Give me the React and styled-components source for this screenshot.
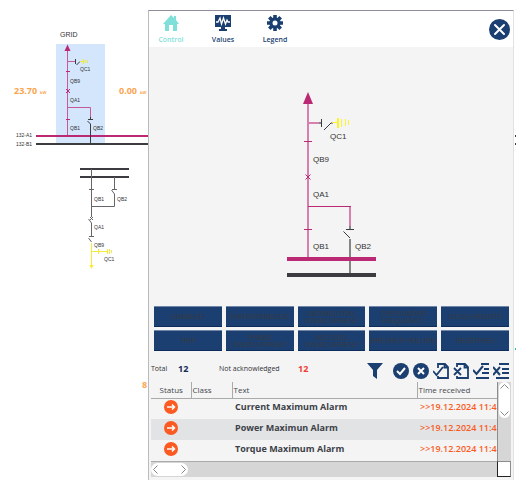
import React from "react";
import styled, { createGlobalStyle } from "styled-components";

const navy = "#1b3f70";
const magenta = "#bb2873";
const pink = "#d680ae";
const dark = "#3c3c40";
const orange = "#fb5b22";

const GlobalStyle = createGlobalStyle`
  * { box-sizing: border-box; }
  body { margin: 0; background: #fff; font-family: "Open Sans", "Noto Sans", sans-serif; }
  button { font: inherit; border: 0; padding: 0; background: none; cursor: pointer; }
`;

const Page = styled.main`
  display: grid;
  grid-template-columns: 148px minmax(0, 1fr) 2px;
  min-height: 100vh;
`;
const Drawing = styled.svg`
  display: block;
  flex: none;
`;
const Overview = styled.section`
  overflow: hidden;
`;
const Dialog = styled.section`
  display: flex;
  flex-direction: column;
  margin-top: 10px;
  border-left: 1px solid #b9bbc1;
  border-top: 1px solid #8d8c98;
  border-right: 1px solid #e2e2e4;
  background: #f4f4f4;
`;
const Header = styled.header`
  display: flex;
  justify-content: space-between;
  align-items: center;
  height: 36px;
  padding-right: 3px;
  background: #fff;
`;
const Tabs = styled.nav`
  display: flex;
  gap: 8px;
  padding-top: 2px;
`;
const Tab = styled.button`
  display: flex;
  flex-direction: column;
  align-items: center;
  gap: 4px;
  width: 44px;
  font-size: 7px;
  line-height: 10px;
  font-weight: 600;
  color: ${(p) => (p.$active ? "#7fdfd9" : navy)};
`;
const IconButton = styled.button`
  display: flex;
  color: ${navy};
`;
const DiagramArea = styled.div`
  display: flex;
  justify-content: center;
  padding: 43px 0 28px 2px;
`;
const Functions = styled.div`
  display: grid;
  grid-template-columns: repeat(5, minmax(0, 1fr));
  gap: 3px 4px;
  padding: 0 4px 0 5px;
`;
const FunctionButton = styled.button`
  height: 21px;
  border-top: 1px solid #7186a6;
  border-bottom: 1px solid #0d2b5b;
  background: ${navy};
  color: #373b43;
  font-family: "Liberation Sans", Arial, sans-serif;
  font-size: 7px;
  line-height: 7px;
  white-space: pre-line;
`;
const Summary = styled.div`
  display: flex;
  justify-content: space-between;
  align-items: center;
  height: 31px;
  padding: 8px 4px 0 2px;
`;
const Counts = styled.dl`
  display: grid;
  grid-template-columns: 27px 41px 79px auto;
  align-items: center;
  margin: 0 0 4px;
  font-size: 7px;
  line-height: 12px;
  color: #303238;
`;
const Count = styled.dd`
  margin: 0;
  font-size: 9px;
  font-weight: 700;
  color: ${(p) => (p.$alert ? "#f03c32" : "#122a56")};
`;
const Actions = styled.div`
  display: flex;
  gap: 4px;

  & > :first-child { margin-right: 6px; }
`;
const AlarmList = styled.div`
  display: grid;
  grid-template-columns: minmax(0, 1fr) 14px;
  margin: 0 2px;
`;
const TableView = styled.div`
  overflow: hidden;
`;
const Table = styled.table`
  width: 100%;
  table-layout: fixed;
  border-collapse: collapse;
  white-space: nowrap;
`;
const HeadCell = styled.th`
  width: ${(p) => p.$width};
  height: 16px;
  padding: 0 0 0 1px;
  border-left: ${(p) => (p.$first ? "0" : "1px solid #aaa")};
  border-bottom: 1px solid #aaa;
  text-align: ${(p) => (p.$first ? "center" : "left")};
  font-size: 8px;
  line-height: 12px;
  font-weight: 400;
  color: #44474d;
`;
const AlarmRow = styled.tr`
  background: ${(p) => (p.$alternate ? "#e1e3e5" : "#f4f4f4")};
`;
const Cell = styled.td`
  height: 21px;
  padding: ${(p) => (p.$center ? "0 0 4px" : "0 0 3px 3px")};
  text-align: ${(p) => (p.$center ? "center" : "left")};
  font-size: 9px;
  line-height: 14px;
  font-weight: ${(p) => (p.$time ? 600 : 700)};
  color: ${(p) => (p.$time ? orange : "#3c4148")};

  & svg { display: block; margin: 0 auto; }
`;
const VerticalBar = styled.div`
  display: flex;
  border-left: 1px solid #8c8c8c;
  background: #d6d6d6;
`;
const VerticalThumb = styled.div`
  display: flex;
  flex-direction: column;
  justify-content: space-between;
  align-items: center;
  width: 11px;
  height: 36px;
  margin: 0 1px;
  padding: 2px 0;
  border-radius: 6px;
  background: #fff;
`;
const HorizontalBar = styled.div`
  height: 16px;
  border-top: 1px solid #aaa;
  background: #d6d6d6;
`;
const HorizontalThumb = styled.div`
  display: flex;
  justify-content: space-between;
  align-items: center;
  width: 37px;
  height: 13px;
  padding: 0 2px;
  margin-top: 1px;
  border-radius: 7px;
  background: #fff;
`;
const Corner = styled.div`
  border: 1px solid #8c8c8c;
  border-left-color: #222;
  border-bottom-color: #222;
  background: #fff;
`;
const DiagramLabel = styled.text`
  font-family: "Liberation Sans", Arial, sans-serif;
  font-size: ${(p) => p.$size}px;
  fill: #333;
`;
const Measure = styled.text`
  font-size: ${(p) => p.$size}px;
  font-weight: 700;
  fill: #fba54f;
`;

const OverviewDiagram = () => (
  <Drawing width="148" height="470" viewBox="0 0 148 470" role="img" aria-label="Grid overview">
    <rect x="56" y="44" width="49" height="101" fill="#d3e6fb" />
    <DiagramLabel $size={7} x="60" y="37">GRID</DiagramLabel>
    <g fill="none" stroke={magenta}>
      <path stroke="#c75a96" d="M67.5 50V135M68 61.500H75M67.500 107.500H90.500V117" />
      <path d="M66 71.500H70M66 119.500H70M66 89L70 93M70 89L66 93" />
      <path strokeWidth="2" d="M36 136H148" />
    </g>
    <path fill={magenta} d="M67.500 44.500L70.500 51H64.500Z" />
    <g fill="none" stroke={dark}>
      <path d="M75.500 59V64M76.500 65L80 61.500M88 119.500H93M87.500 121L90.500 124V144M90.500 117V119" />
      <path strokeWidth="2" d="M36 144H148M80 169H129M80 177H129" />
      <path stroke="#66666a" d="M91.500 169V217M91.500 206.500H114.500V194M114.500 177V189M111.500 190L114.500 194M89 189.500H94M112 189.500H117M90 217L93 220M93 217L90 220M88.500 219L91.500 223V236M89 236.500H94M88.500 238L91.500 242" />
    </g>
    <g fill="none" stroke="#efe83c">
      <path d="M80 61.500H83M83.500 59V64M85.500 60V63M87.500 60V63" />
      <path stroke="#f6e83c" d="M91.500 243V267M91.500 251.500H107M98.500 249V254M107.500 249V254M109.500 249V254M111.500 250V253" />
    </g>
    <path fill="#fbea28" d="M89.500 265H93.500L91.500 269Z" />
    <DiagramLabel $size={5} x="80" y="71">QC1</DiagramLabel>
    <DiagramLabel $size={5} x="70" y="83">QB9</DiagramLabel>
    <DiagramLabel $size={5} x="70" y="102">QA1</DiagramLabel>
    <DiagramLabel $size={5} x="70" y="130">QB1</DiagramLabel>
    <DiagramLabel $size={5} x="93" y="130">QB2</DiagramLabel>
    <DiagramLabel $size={5} x="16" y="137">132-A1</DiagramLabel>
    <DiagramLabel $size={5} x="16" y="146">132-B1</DiagramLabel>
    <DiagramLabel $size={5} x="94" y="201">QB1</DiagramLabel>
    <DiagramLabel $size={5} x="117" y="201">QB2</DiagramLabel>
    <DiagramLabel $size={5} x="94" y="229">QA1</DiagramLabel>
    <DiagramLabel $size={5} x="94" y="247">QB9</DiagramLabel>
    <DiagramLabel $size={5} x="104" y="261">QC1</DiagramLabel>
    <Measure $size={9} x="14" y="94">23.70</Measure>
    <Measure $size={4} x="40" y="94">kW</Measure>
    <Measure $size={9} x="119" y="94">0.00</Measure>
    <Measure $size={4} x="140" y="94">kW</Measure>
    <Measure $size={9} x="142" y="388">8</Measure>
  </Drawing>
);

const FeederDiagram = () => (
  <Drawing width="90" height="188" viewBox="0 0 90 188" role="img" aria-label="Feeder diagram">
    <g fill="none">
      <path stroke={pink} strokeWidth="2" d="M21 12V168M63 117V136" />
      <path stroke={magenta} d="M21 116.500H64M17 51.500H25M17 139.500H25" />
      <path stroke={pink} strokeWidth="2" d="M22 33H32" />
      <path stroke={magenta} strokeWidth="1" d="M18.500 84.500L23.500 89.500M23.500 84.500L18.500 89.500" />
      <path stroke="#858588" strokeWidth="2" d="M63 149V184M32 33H34M63 136V139" />
      <path stroke={dark} d="M34.500 29V37M37 40L44 33H46M59 139.500H67M56.500 141.500L63 148" />
      <path stroke="#fbf32d" d="M45 32.500H51M58.500 29V36M61.500 30V35" />
      <path stroke="#fbf32d" strokeWidth="2" d="M51 28V38" />
      <path stroke="#fbf32d" d="M54.500 29V37" />
      <path stroke={magenta} strokeWidth="4" d="M0 169H89" />
      <path stroke={dark} strokeWidth="4" d="M0 185H89" />
    </g>
    <path fill={magenta} d="M21 2L26 14H16Z" />
    <DiagramLabel $size={8} x="43" y="49">QC1</DiagramLabel>
    <DiagramLabel $size={8} x="26" y="72">QB9</DiagramLabel>
    <DiagramLabel $size={8} x="26" y="107">QA1</DiagramLabel>
    <DiagramLabel $size={8} x="26" y="159">QB1</DiagramLabel>
    <DiagramLabel $size={8} x="68" y="159">QB2</DiagramLabel>
  </Drawing>
);

const HomeIcon = () => (
  <Drawing width="16" height="16" viewBox="0 0 16 16" fill="currentColor" aria-hidden="true">
    <path d="M8 0L11 3V1H13V5L16 9H14V16H10V10H6V16H2V9H0Z" />
  </Drawing>
);
const MonitorIcon = () => (
  <Drawing width="16" height="16" viewBox="0 0 16 16" fill="currentColor" aria-hidden="true">
    <path d="M0 0H16V12H10V14H12V16H4V14H6V12H0Z" />
    <path d="M1 7H3L5 3L6.500 9L8.500 3L10.500 9L12 5L13 7H15" fill="none" stroke="#fff" strokeWidth="1.300" />
  </Drawing>
);
const GearIcon = () => (
  <Drawing width="16" height="16" viewBox="0 0 16 16" aria-hidden="true">
    <g stroke="currentColor" strokeWidth="3.600">
      <path d="M8 0V16M0 8H16M2.300 2.300L13.700 13.700M13.700 2.300L2.300 13.700" />
    </g>
    <circle cx="8" cy="8" r="5.700" fill="currentColor" />
    <circle cx="8" cy="8" r="2.500" fill="#fff" />
  </Drawing>
);
const CloseIcon = () => (
  <Drawing width="21" height="21" viewBox="0 0 21 21" aria-hidden="true">
    <circle cx="10.500" cy="10.500" r="10.500" fill="currentColor" />
    <path d="M6 6L15 15M15 6L6 15" stroke="#fff" strokeWidth="2" strokeLinecap="round" />
  </Drawing>
);

const glyphs = {
  filter: <path d="M0 0H16L10 7V16L6 13V7Z" fill="currentColor" />,
  ack: (
    <>
      <circle cx="8" cy="8" r="8" fill="currentColor" />
      <path d="M4 8L7 11L12 5" stroke="#fff" strokeWidth="2" />
    </>
  ),
  reject: (
    <>
      <circle cx="8" cy="8" r="8" fill="currentColor" />
      <path d="M5 5L11 11M11 5L5 11" stroke="#fff" strokeWidth="2" />
    </>
  ),
  ackPage: (
    <path d="M5 5V1H12L15 4V15H5V13M11.500 1V4.500H15M0 8L3.500 12L10 4" stroke="currentColor" strokeWidth="1.800" />
  ),
  rejectPage: (
    <path d="M4 4V1H12L15 4V15H4V13M11.500 1V4.500H15M1 5L8 12M8 5L1 12" stroke="currentColor" strokeWidth="1.800" />
  ),
  ackList: (
    <path d="M8 1H16M11 6H16M9 10H16M3 15H16M0 7L3.500 11L10 3" stroke="currentColor" strokeWidth="2" />
  ),
  rejectList: (
    <path d="M6 1H16M9 6H16M9 10H16M3 15H16M0 4L7 12M7 4L0 12" stroke="currentColor" strokeWidth="2" />
  ),
};

const actions = [
  ["filter", "Filter"],
  ["ack", "Acknowledge"],
  ["reject", "Reject"],
  ["ackPage", "Acknowledge page"],
  ["rejectPage", "Reject page"],
  ["ackList", "Acknowledge all"],
  ["rejectList", "Reject all"],
];

const AlarmIcon = () => (
  <svg width="14" height="14" viewBox="0 0 14 14" role="img" aria-label="Incoming">
    <circle cx="7" cy="7" r="7" fill={orange} />
    <path d="M3 7H10M8 4.500L10.500 7L8 9.500" fill="none" stroke="#fff" strokeWidth="1.500" />
  </svg>
);

const Chevron = ({ d, width, height }) => (
  <Drawing width={width} height={height} viewBox={`0 0 ${width} ${height}`} aria-hidden="true">
    <path d={d} fill="none" stroke="#888" />
  </Drawing>
);

const functions = [
  "ENABLED",
  "INSTANTANEOUS",
  "GND/NEUTRAL\nOVERCURRENT",
  "OVER/UNDER\nFREQUENCY",
  "LOCAL/REMOTE",
  "TRIP",
  "PHASE\nOVERCURRENT",
  "NEG SEQ\nOVERCURRENT",
  "BREAKER FAILURE",
  "RESERVED",
];

const alarms = ["Current Maximum Alarm", "Power Maximun Alarm", "Torque Maximum Alarm"];

export default function App() {
  return (
    <>
      <GlobalStyle />
      <Page>
        <Overview>
          <OverviewDiagram />
        </Overview>
        <Dialog role="dialog" aria-label="Feeder control">
          <Header>
            <Tabs>
              <Tab $active aria-current="page"><HomeIcon />Control</Tab>
              <Tab><MonitorIcon />Values</Tab>
              <Tab><GearIcon />Legend</Tab>
            </Tabs>
            <IconButton aria-label="Close"><CloseIcon /></IconButton>
          </Header>
          <DiagramArea>
            <FeederDiagram />
          </DiagramArea>
          <Functions>
            {functions.map((name) => (
              <FunctionButton key={name}>{name}</FunctionButton>
            ))}
          </Functions>
          <Summary>
            <Counts>
              <dt>Total</dt>
              <Count>12</Count>
              <dt>Not acknowledged</dt>
              <Count $alert>12</Count>
            </Counts>
            <Actions>
              {actions.map(([glyph, label]) => (
                <IconButton key={glyph} aria-label={label}>
                  <Drawing width="16" height="16" viewBox="0 0 16 16" fill="none" aria-hidden="true">
                    {glyphs[glyph]}
                  </Drawing>
                </IconButton>
              ))}
            </Actions>
          </Summary>
          <AlarmList>
            <TableView>
              <Table>
                <thead>
                  <tr>
                    <HeadCell $first $width="40px">Status</HeadCell>
                    <HeadCell $width="41px">Class</HeadCell>
                    <HeadCell>Text</HeadCell>
                    <HeadCell $width="80px">Time received</HeadCell>
                  </tr>
                </thead>
                <tbody>
                  {alarms.map((text, index) => (
                    <AlarmRow key={text} $alternate={index % 2 === 1}>
                      <Cell $center><AlarmIcon /></Cell>
                      <Cell />
                      <Cell>{text}</Cell>
                      <Cell $time>&gt;&gt;19.12.2024 11:4</Cell>
                    </AlarmRow>
                  ))}
                </tbody>
              </Table>
            </TableView>
            <VerticalBar>
              <VerticalThumb>
                <Chevron width={9} height={5} d="M0.500 4.500L4.500 0.500L8.500 4.500" />
                <Chevron width={9} height={5} d="M0.500 0.500L4.500 4.500L8.500 0.500" />
              </VerticalThumb>
            </VerticalBar>
            <HorizontalBar>
              <HorizontalThumb>
                <Chevron width={5} height={9} d="M4.500 0.500L0.500 4.500L4.500 8.500" />
                <Chevron width={5} height={9} d="M0.500 0.500L4.500 4.500L0.500 8.500" />
              </HorizontalThumb>
            </HorizontalBar>
            <Corner />
          </AlarmList>
        </Dialog>
        <Drawing width="2" height="470" viewBox="0 0 2 470" aria-hidden="true">
          <path d="M1 136H2M1 144H2" stroke={dark} strokeWidth="2" />
          <path d="M1 349H2" stroke="#20c3a2" strokeWidth="2" />
        </Drawing>
      </Page>
    </>
  );
}
